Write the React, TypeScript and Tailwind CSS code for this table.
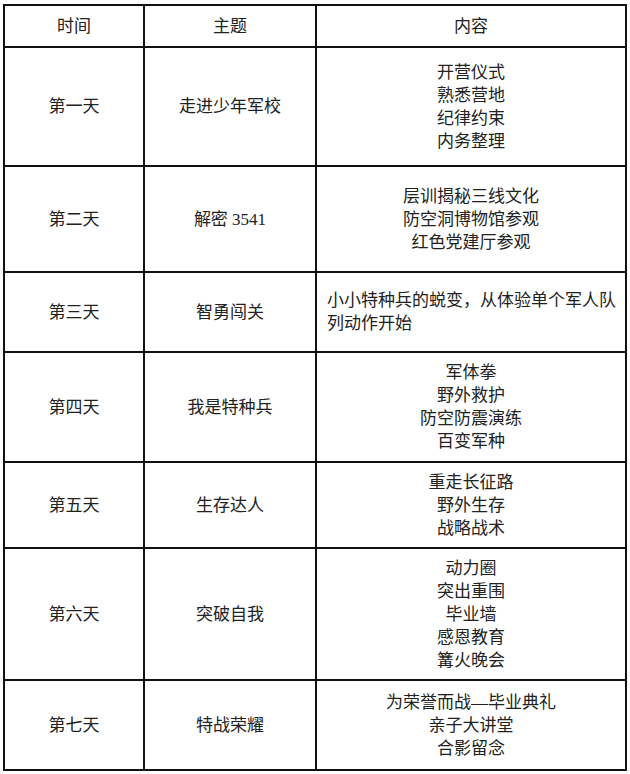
const rows: { day: string; theme: string; items: string[]; h: string; left?: boolean }[] = [
  { day: '第一天', theme: '走进少年军校', items: ['开营仪式', '熟悉营地', '纪律约束', '内务整理'], h: 'h-[119px]' },
  { day: '第二天', theme: '解密 3541', items: ['层训揭秘三线文化', '防空洞博物馆参观', '红色党建厅参观'], h: 'h-[106px]' },
  { day: '第三天', theme: '智勇闯关', items: ['小小特种兵的蜕变，从体验单个军人队', '列动作开始'], h: 'h-[80px]', left: true },
  { day: '第四天', theme: '我是特种兵', items: ['军体拳', '野外救护', '防空防震演练', '百变军种'], h: 'h-[110px]' },
  { day: '第五天', theme: '生存达人', items: ['重走长征路', '野外生存', '战略战术'], h: 'h-[86px]' },
  { day: '第六天', theme: '突破自我', items: ['动力圈', '突出重围', '毕业墙', '感恩教育', '篝火晚会'], h: 'h-[132px]' },
  { day: '第七天', theme: '特战荣耀', items: ['为荣誉而战—毕业典礼', '亲子大讲堂', '合影留念'], h: 'h-[90px]' },
];

const cell = 'flex items-center justify-center border-r-2 border-b-2 border-[#111] text-center';

export default function App() {
  return (
    <div className="min-h-[774px] bg-white pl-[3px] pt-[4px] font-['Liberation_Serif','Noto_Sans_CJK_SC',serif] text-[17px] leading-[23px] text-[#222]">
      <div className="grid w-[624px] grid-cols-[140px_172px_310px] border-l-2 border-t-2 border-[#111]">
        <div className={`${cell} h-[42px]`}>时间</div>
        <div className={`${cell} h-[42px]`}>主题</div>
        <div className={`${cell} h-[42px]`}>内容</div>
        {rows.map((r) => (
          <div key={r.day} className="contents">
            <div className={`${cell} ${r.h}`}>{r.day}</div>
            <div className={`${cell} ${r.h}`}>{r.theme}</div>
            <div
              className={`${r.h} flex flex-col justify-center border-r-2 border-b-2 border-[#111] ${
                r.left ? 'items-start pl-[10px] text-left' : 'items-center text-center'
              }`}
            >
              {r.items.map((t) => (
                <div key={t}>{t}</div>
              ))}
            </div>
          </div>
        ))}
      </div>
    </div>
  );
}
